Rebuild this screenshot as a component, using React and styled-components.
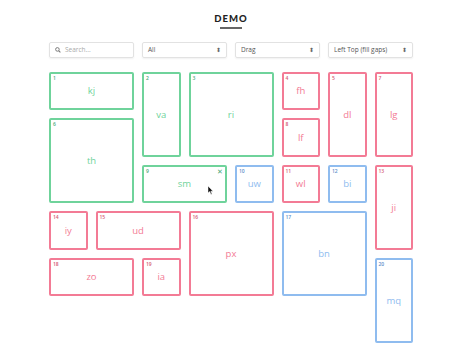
import React from "react";
import styled, { createGlobalStyle } from "styled-components";

const Global = createGlobalStyle`
  html, body { margin: 0; padding: 0; background: #fff; }
  body { font-family: "Open Sans", "Noto Sans", sans-serif; overflow: hidden; }
`;

const Page = styled.div`
  width: 462px;
  height: 347px;
  display: flex;
  flex-direction: column;
  align-items: center;
  overflow: hidden;
`;

const Title = styled.h1`
  margin: 14px 0 0;
  font-family: "Lato", sans-serif;
  font-weight: 900;
  font-size: 9.5px;
  line-height: 10px;
  letter-spacing: 1px;
  color: #222;
  display: flex;
  flex-direction: column;
  align-items: center;
  &::after {
    content: "";
    display: block;
    width: 22px;
    height: 1.5px;
    margin-top: 3px;
    background: #666;
  }
`;

const Controls = styled.div`
  margin-top: 13px;
  width: 364px;
  display: grid;
  grid-template-columns: repeat(4, 1fr);
  gap: 8px;
`;

const Field = styled.div`
  height: 16px;
  box-sizing: border-box;
  border: 1px solid #e2e2e2;
  border-radius: 2px;
  box-shadow: 0 1px 2px rgba(0,0,0,0.06);
  display: flex;
  align-items: center;
  padding: 0 5px;
  gap: 4px;
  font-size: 6.5px;
  color: ${(p) => (p.$placeholder ? "#aaa" : "#555")};
`;

const Grow = styled.span`
  flex: 1;
  white-space: nowrap;
`;

const Arrows = styled.span`
  font-size: 6px;
  color: #666;
  line-height: 1;
`;

const Board = styled.div`
  margin-top: 14px;
  width: 364px;
  display: grid;
  grid-template-columns: repeat(8, 1fr);
  grid-auto-rows: 38.5px;
  gap: 8px;
`;

const colors = {
  g: "#6fd39b",
  p: "#f37b95",
  b: "#8fbcef",
};

const numColors = {
  g: "#4aa877",
  p: "#d45a74",
  b: "#5f8fca",
};

const Tile = styled.div`
  position: relative;
  box-sizing: border-box;
  border: 2px solid ${(p) => colors[p.$c]};
  border-radius: 2px;
  color: ${(p) => colors[p.$c]};
  grid-column: ${(p) => p.$x} / span ${(p) => p.$w};
  grid-row: ${(p) => p.$y} / span ${(p) => p.$h};
  display: flex;
  align-items: center;
  justify-content: center;
  font-family: "Open Sans", sans-serif;
  font-size: 9.5px;
`;

const Num = styled.span`
  position: absolute;
  left: 2px;
  top: 1px;
  font-size: 5px;
  font-weight: 600;
  color: ${(p) => numColors[p.$c]};
`;

const Close = styled.span`
  position: absolute;
  right: 2px;
  top: 0px;
  font-size: 7px;
  color: ${(p) => numColors[p.$c]};
`;

const Cursor = styled.svg`
  position: absolute;
  left: 64px;
  top: 19px;
`;

const tiles = [
  [1, "kj", "g", 1, 1, 2, 1],
  [2, "va", "g", 3, 1, 1, 2],
  [3, "ri", "g", 4, 1, 2, 2],
  [4, "fh", "p", 6, 1, 1, 1],
  [5, "dl", "p", 7, 1, 1, 2],
  [7, "lg", "p", 8, 1, 1, 2],
  [8, "lf", "p", 6, 2, 1, 1],
  [6, "th", "g", 1, 2, 2, 2],
  [9, "sm", "g", 3, 3, 2, 1],
  [10, "uw", "b", 5, 3, 1, 1],
  [11, "wl", "p", 6, 3, 1, 1],
  [12, "bi", "b", 7, 3, 1, 1],
  [13, "ji", "p", 8, 3, 1, 2],
  [14, "iy", "p", 1, 4, 1, 1],
  [15, "ud", "p", 2, 4, 2, 1],
  [16, "px", "p", 4, 4, 2, 2],
  [17, "bn", "b", 6, 4, 2, 2],
  [18, "zo", "p", 1, 5, 2, 1],
  [19, "ia", "p", 3, 5, 1, 1],
  [20, "mq", "b", 8, 5, 1, 2],
];

export default function App() {
  return (
    <Page>
      <Global />
      <Title>DEMO</Title>
      <Controls>
        <Field $placeholder>
          <svg width="6" height="6" viewBox="0 0 10 10">
            <circle cx="4" cy="4" r="3" fill="none" stroke="#777" strokeWidth="1.6" />
            <line x1="6.3" y1="6.3" x2="9" y2="9" stroke="#777" strokeWidth="1.8" />
          </svg>
          <Grow>Search...</Grow>
        </Field>
        <Field>
          <Grow>All</Grow>
          <Arrows>⬍</Arrows>
        </Field>
        <Field>
          <Grow>Drag</Grow>
          <Arrows>⬍</Arrows>
        </Field>
        <Field>
          <Grow>Left Top (fill gaps)</Grow>
          <Arrows>⬍</Arrows>
        </Field>
      </Controls>
      <Board>
        {tiles.map(([n, label, c, x, y, w, h]) => (
          <Tile key={n} $c={c} $x={x} $y={y} $w={w} $h={h}>
            <Num $c={c}>{n}</Num>
            {label}
            {n === 9 && (
              <>
                <Close $c={c}>✕</Close>
                <Cursor width="6" height="9" viewBox="0 0 6 9">
                  <path d="M0 0 L0 7 L1.7 5.5 L3 8.5 L4 8 L2.8 5.2 L5 5.2 Z" fill="#111" stroke="#fff" strokeWidth="0.5" />
                </Cursor>
              </>
            )}
          </Tile>
        ))}
      </Board>
    </Page>
  );
}
